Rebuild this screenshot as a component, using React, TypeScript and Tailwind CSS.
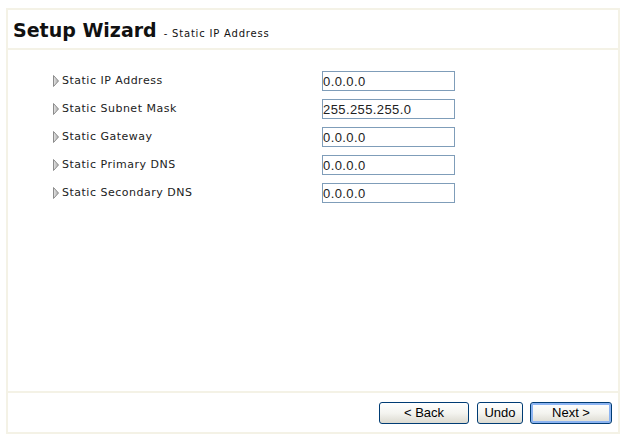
const fields = [
  { label: "Static IP Address", value: "0.0.0.0" },
  { label: "Static Subnet Mask", value: "255.255.255.0" },
  { label: "Static Gateway", value: "0.0.0.0" },
  { label: "Static Primary DNS", value: "0.0.0.0" },
  { label: "Static Secondary DNS", value: "0.0.0.0" },
];

function Arrow() {
  return (
    <svg width="6" height="12" viewBox="0 0 6 12" className="shrink-0">
      <defs>
        <linearGradient id="arr" x1="0" y1="0" x2="1" y2="0">
          <stop offset="0" stopColor="#e6e6e6" />
          <stop offset="1" stopColor="#a8a8a8" />
        </linearGradient>
      </defs>
      <path d="M0.5 0.5 L5.5 6 L0.5 11.5 Z" fill="url(#arr)" stroke="#8c8c8c" strokeWidth="1" />
    </svg>
  );
}

function XpButton({ children, className, focused }: { children: string; className: string; focused?: boolean }) {
  return (
    <button
      type="button"
      className={`${className} flex h-[22px] items-center justify-center rounded-[3px] border border-[#003c74] bg-gradient-to-b from-white via-[#f4f4f0] to-[#dcdad0] font-['Liberation_Sans',Arial,sans-serif] text-[13px] text-black ${
        focused ? "shadow-[inset_0_0_0_2px_#8cb4f2]" : ""
      }`}
    >
      {children}
    </button>
  );
}

export default function App() {
  return (
    <div className="h-[440px] w-[626px] bg-white pl-[6px] pt-[8px]">
      <div className="flex h-[426px] w-[614px] flex-col border-2 border-[#f4f2e6]">
        <div className="flex h-[40px] items-end border-b-2 border-[#f4f2e6] pb-[8px] pl-[5px]">
          <span className="font-['DejaVu_Sans',Verdana,sans-serif] text-[19px] font-bold leading-none text-[#111]">
            Setup Wizard
          </span>
          <span className="mb-[1px] ml-[7px] font-['DejaVu_Sans',Verdana,sans-serif] text-[10px] leading-none tracking-[0.8px] text-[#111]">
            - Static IP Address
          </span>
        </div>

        <div className="flex flex-1 flex-col gap-[8px] pl-[45px] pt-[21px]">
          {fields.map((f) => (
            <div key={f.label} className="flex h-[20px] items-center">
              <div className="flex w-[269px] items-center gap-[3px]">
                <Arrow />
                <span className="font-['DejaVu_Sans',Verdana,sans-serif] text-[11px] tracking-[0.5px] text-[#222]">
                  {f.label}
                </span>
              </div>
              <input
                readOnly
                value={f.value}
                className="h-[20px] w-[133px] border border-[#7f9db9] bg-white px-0 font-['Liberation_Sans',Arial,sans-serif] text-[13px] tracking-[0.4px] text-[#222] outline-none"
              />
            </div>
          ))}
        </div>

        <div className="flex h-[41px] items-start justify-end border-t-2 border-[#f4f2e6] pr-[6px] pt-[9px]">
          <XpButton className="w-[90px]">&lt; Back</XpButton>
          <XpButton className="ml-[8px] w-[46px]">Undo</XpButton>
          <XpButton className="ml-[7px] w-[82px]" focused>
            Next &gt;
          </XpButton>
        </div>
      </div>
    </div>
  );
}
